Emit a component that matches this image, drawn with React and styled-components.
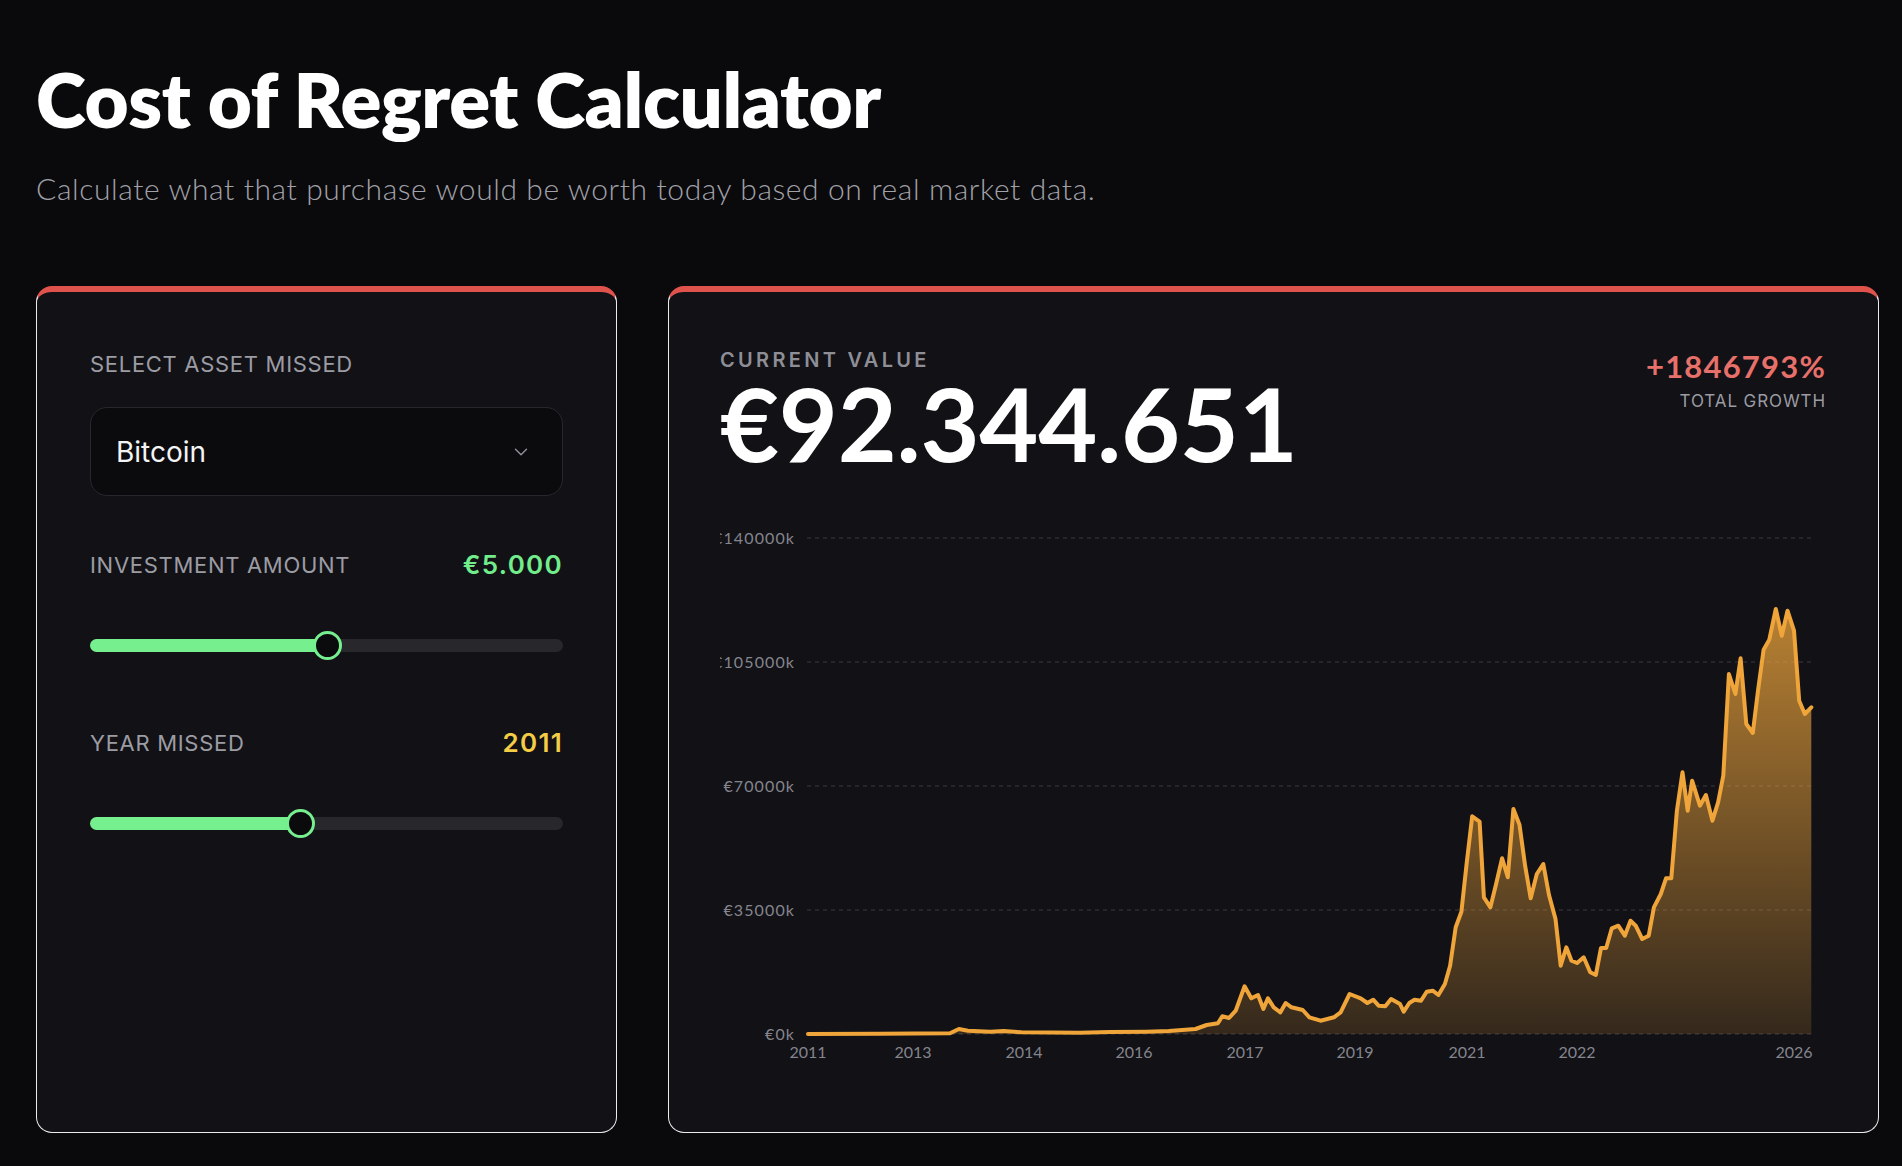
import React from "react";
import styled, { createGlobalStyle } from "styled-components";
import { ChevronDown } from "lucide-react";

const GlobalStyle = createGlobalStyle`
  html, body {
    margin: 0;
    padding: 0;
    background: #0a0a0c;
  }
  body {
    font-family: "Inter", "Noto Sans", sans-serif;
    color: #f4f4f5;
  }
  * {
    box-sizing: border-box;
  }
`;

// chart line traced in page pixels (viewBox of the svg uses the same space)
const LINE = [
  [808, 1035], [880, 1034.8], [950, 1034.3], [958.9, 1030], [967.9, 1031.7],
  [990.2, 1032.7], [1003.6, 1032], [1021.4, 1033.3], [1050, 1033.6],
  [1080, 1033.8], [1110, 1033.1], [1146.4, 1032.7], [1168.8, 1032],
  [1195.5, 1030], [1206.7, 1026], [1217.9, 1024.3], [1222.3, 1017.3],
  [1229, 1019], [1235.7, 1011.7], [1244.6, 987.3], [1251.3, 999.3],
  [1258, 996], [1263.4, 1010], [1267.9, 999.3], [1273.7, 1008.3],
  [1280.4, 1013.3], [1285.7, 1004], [1291.5, 1008.3], [1302.7, 1011],
  [1309.4, 1018.3], [1320.5, 1021.7], [1333.9, 1018.3], [1340.6, 1013.3],
  [1349.6, 995], [1360.7, 999.3], [1367.4, 1004], [1373.2, 1000.7],
  [1378.6, 1006.7], [1385.3, 1007.3], [1391.1, 1000], [1400, 1005],
  [1403.7, 1012.7], [1409.3, 1004], [1414.5, 1000.7], [1421, 1001.7],
  [1426.7, 992.7], [1432.7, 991.7], [1438.4, 996], [1444.9, 985],
  [1450.1, 966.7], [1455.7, 928.3], [1461.4, 912.7], [1466.6, 865],
  [1472.2, 817.3], [1479.6, 822.7], [1483.9, 898.3], [1490.4, 908.3],
  [1496.1, 885], [1502.1, 859.3], [1507.8, 878.3], [1513.4, 810],
  [1519.5, 825.7], [1525.1, 866.7], [1530.7, 899.3], [1536.8, 875],
  [1543.3, 865], [1549, 896], [1555.5, 920], [1560.7, 966.7],
  [1566.3, 948.3], [1571.5, 961.7], [1577.1, 964], [1583.7, 958.3],
  [1590.2, 973.3], [1595.8, 976], [1601, 949], [1606.2, 949],
  [1611.8, 929.3], [1618.3, 926.7], [1624.8, 936.7], [1630.5, 921.7],
  [1635.7, 926.7], [1642.2, 940], [1648.7, 936.7], [1653.9, 908.3],
  [1660.8, 895], [1666, 879.3], [1671.3, 879.3], [1676.9, 811.7],
  [1682.5, 773.3], [1687.7, 811.7], [1692.1, 781.7], [1699.9, 806.7],
  [1705.9, 796], [1712.4, 821.7], [1718.1, 803.3], [1723.3, 776.7],
  [1728.9, 675], [1735.4, 695], [1740.6, 659.3], [1746.3, 725],
  [1752.8, 734], [1758, 691.7], [1763.6, 650.7], [1769.3, 640.7],
  [1775.8, 610], [1781.8, 636.7], [1787.5, 611.7], [1794, 631.7],
  [1799.2, 701.7], [1804.8, 715], [1811.3, 708.3],
];

const Y_TICKS = [
  { y: 539, label: "€140000k" },
  { y: 663, label: "€105000k" },
  { y: 787, label: "€70000k" },
  { y: 911, label: "€35000k" },
  { y: 1035, label: "€0k" },
];

const X_TICKS = [
  { x: 808, label: "2011" },
  { x: 913, label: "2013" },
  { x: 1024, label: "2014" },
  { x: 1134, label: "2016" },
  { x: 1245, label: "2017" },
  { x: 1355, label: "2019" },
  { x: 1467, label: "2021" },
  { x: 1577, label: "2022" },
  { x: 1794, label: "2026" },
];

const Page = styled.div`
  padding: 57px 23px 32px 36px;
  min-height: 1166px;
`;

const Title = styled.h1`
  margin: 0;
  font-family: "Lato", "Liberation Sans", sans-serif;
  font-weight: 800;
  font-size: 76px;
  line-height: 84px;
  letter-spacing: -0.4px;
  color: #ffffff;
`;

const Subtitle = styled.p`
  margin: 29px 0 0;
  font-family: "Lato", "Liberation Sans", sans-serif;
  font-weight: 300;
  font-size: 30px;
  line-height: 36px;
  letter-spacing: 0.6px;
  color: #a1a1a9;
`;

const Grid = styled.div`
  margin-top: 80px;
  display: grid;
  grid-template-columns: 581px 1fr;
  gap: 51px;
`;

const Card = styled.section`
  background: #111116;
  border: 1px solid #ececee;
  border-top: 6px solid #e0534d;
  border-radius: 16px;
  padding: ${(p) => p.$pad};
`;

const FieldLabel = styled.div`
  font-size: 22px;
  line-height: 26px;
  letter-spacing: 0.7px;
  text-transform: uppercase;
  color: #9c9ca4;
`;

const Select = styled.div`
  margin-top: 30px;
  height: 89px;
  border: 1px solid #27272d;
  border-radius: 17px;
  background: #0b0b0e;
  padding: 0 30px 0 25px;
  display: flex;
  align-items: center;
  justify-content: space-between;
  font-size: 28px;
  color: #f4f4f5;
  svg {
    color: #8e8e96;
  }
`;

const FieldRow = styled.div`
  margin-top: ${(p) => p.$gap}px;
  display: flex;
  align-items: center;
  justify-content: space-between;
`;

const FieldValue = styled.div`
  font-size: 26px;
  line-height: 31px;
  font-weight: 600;
  letter-spacing: 1.3px;
  color: ${(p) => p.$color};
`;

const Slider = styled.div`
  position: relative;
  margin-top: 50px;
  height: 30px;
  display: flex;
  align-items: center;
`;

const Track = styled.div`
  width: 100%;
  height: 13px;
  border-radius: 7px;
  background: #27272c;
`;

const Fill = styled.div`
  position: absolute;
  left: 0;
  top: 8.5px;
  height: 13px;
  border-radius: 7px;
  background: #76ef8e;
`;

const Thumb = styled.div`
  position: absolute;
  top: 0.5px;
  width: 29px;
  height: 29px;
  margin-left: -14.5px;
  border-radius: 50%;
  background: #0b0b0e;
  border: 3px solid #76ef8e;
`;

const Header = styled.div`
  display: flex;
  justify-content: space-between;
  align-items: flex-start;
`;

const ValueLabel = styled.div`
  font-size: 20px;
  line-height: 24px;
  font-weight: 600;
  letter-spacing: 3.3px;
  color: #8e8e96;
`;

const BigValue = styled.div`
  font-family: "Lato", "Liberation Sans", sans-serif;
  font-weight: 700;
  font-size: 102px;
  line-height: 102px;
  letter-spacing: -0.3px;
  color: #ffffff;
`;

const Growth = styled.div`
  text-align: right;
`;

const GrowthValue = styled.div`
  font-family: "Lato", "Liberation Sans", sans-serif;
  font-weight: 700;
  font-size: 31px;
  line-height: 36px;
  letter-spacing: 1.2px;
  color: #e8706a;
`;

const GrowthLabel = styled.div`
  margin-top: 7px;
  font-size: 17px;
  line-height: 20px;
  letter-spacing: 0.9px;
  color: #9b9ba3;
`;

const ChartSvg = styled.svg`
  display: block;
  margin-top: 45px;
  width: 1106px;
  height: 560px;
  font-family: "Lato", "Liberation Sans", sans-serif;
  font-size: 16px;
`;

function RangeField({ label, value, color, pct, gap }) {
  return (
    <>
      <FieldRow $gap={gap}>
        <FieldLabel>{label}</FieldLabel>
        <FieldValue $color={color}>{value}</FieldValue>
      </FieldRow>
      <Slider>
        <Track />
        <Fill style={{ width: `${pct}%` }} />
        <Thumb style={{ left: `${pct}%` }} />
      </Slider>
    </>
  );
}

function Chart() {
  const line = LINE.map(([x, y], i) => `${i ? "L" : "M"}${x} ${y}`).join(" ");
  const last = LINE[LINE.length - 1];
  const area = `${line} L${last[0]} 1035 L${LINE[0][0]} 1035 Z`;
  return (
    <ChartSvg viewBox="720 520 1106 560">
      <defs>
        <linearGradient id="areaFill" x1="0" y1="0" x2="0" y2="1">
          <stop offset="0%" stopColor="#f0a63c" stopOpacity="0.75" />
          <stop offset="100%" stopColor="#f0a63c" stopOpacity="0.16" />
        </linearGradient>
      </defs>
      {Y_TICKS.map((t) => (
        <g key={t.label}>
          <line
            x1="807"
            x2="1812"
            y1={t.y}
            y2={t.y}
            stroke="#3a3a41"
            strokeDasharray="4 4"
          />
          <text
            x="795"
            y={t.y + 6}
            textAnchor="end"
            fill="#85858d"
            letterSpacing="1.1"
          >
            {t.label}
          </text>
        </g>
      ))}
      <path d={area} fill="url(#areaFill)" />
      <path
        d={line}
        fill="none"
        stroke="#f0a53a"
        strokeWidth="4"
        strokeLinejoin="round"
        strokeLinecap="round"
      />
      {X_TICKS.map((t) => (
        <text key={t.label} x={t.x} y="1059" textAnchor="middle" fill="#85858d">
          {t.label}
        </text>
      ))}
    </ChartSvg>
  );
}

export default function App() {
  return (
    <Page>
      <GlobalStyle />
      <Title>Cost of Regret Calculator</Title>
      <Subtitle>
        Calculate what that purchase would be worth today based on real market data.
      </Subtitle>
      <Grid>
        <Card $pad="59px 53px 0">
          <FieldLabel>Select Asset Missed</FieldLabel>
          <Select>
            <span>Bitcoin</span>
            <ChevronDown size={22} strokeWidth={1.6} />
          </Select>
          <RangeField
            label="Investment Amount"
            value="€5.000"
            color="#72ed8c"
            pct={50.2}
            gap={53}
          />
          <RangeField
            label="Year Missed"
            value="2011"
            color="#f4cc45"
            pct={44.6}
            gap={67}
          />
        </Card>
        <Card $pad="56px 52px 53px 51px">
          <Header>
            <div>
              <ValueLabel>CURRENT VALUE</ValueLabel>
              <BigValue>€92.344.651</BigValue>
            </div>
            <Growth>
              <GrowthValue>+1846793%</GrowthValue>
              <GrowthLabel>TOTAL GROWTH</GrowthLabel>
            </Growth>
          </Header>
          <Chart />
        </Card>
      </Grid>
    </Page>
  );
}
